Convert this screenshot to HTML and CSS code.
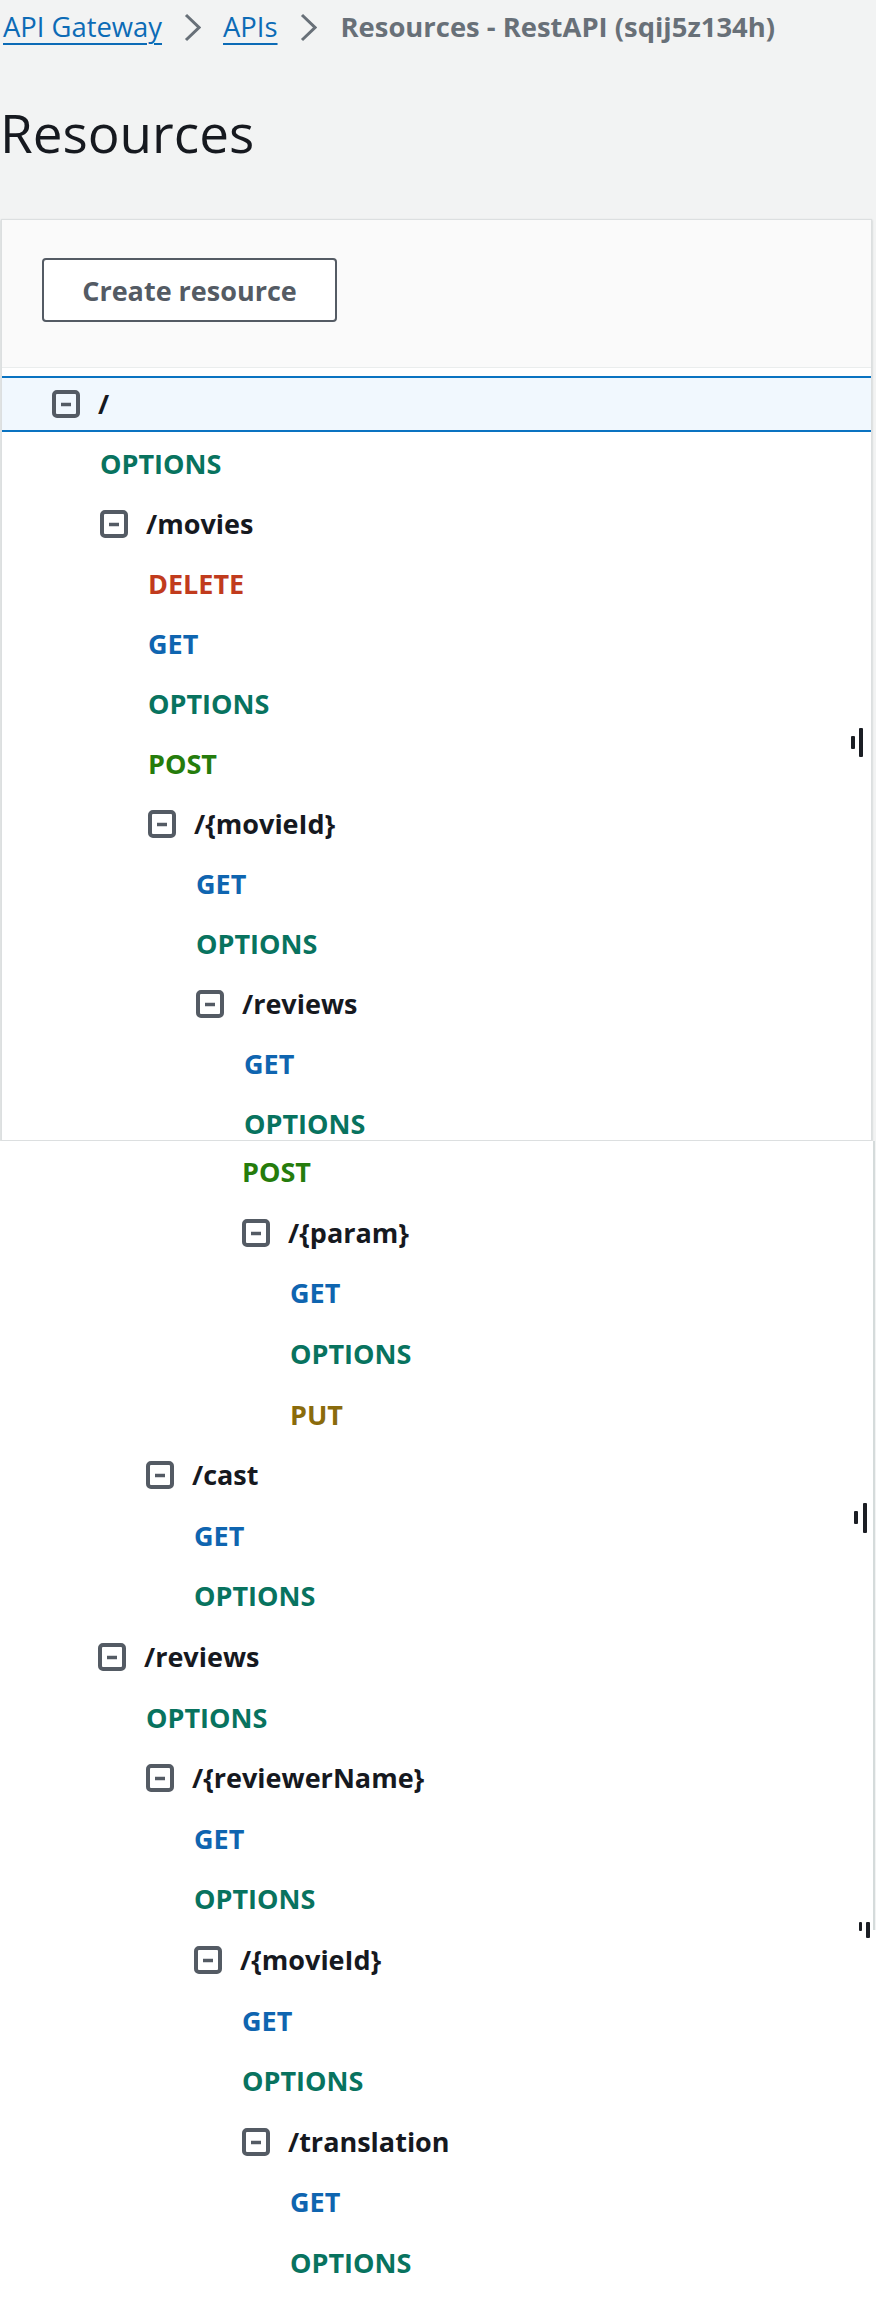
FILE: index.html
```html
<!DOCTYPE html>
<html lang="en">
<head>
<meta charset="utf-8">
<title>Resources - RestAPI</title>
<link rel="stylesheet" href="styles.css">
</head>
<body>
<div class="page">
  <nav class="crumbs">
    <a class="crumb-link" href="#">API Gateway</a>
    <svg class="chev" viewBox="0 0 17 29" width="17" height="29"><path d="M2 2 L15 14.5 L2 27" fill="none" stroke="#687078" stroke-width="3"/></svg>
    <a class="crumb-link" href="#">APIs</a>
    <svg class="chev" viewBox="0 0 17 29" width="17" height="29"><path d="M2 2 L15 14.5 L2 27" fill="none" stroke="#687078" stroke-width="3"/></svg>
    <span class="crumb-current">Resources - RestAPI (sqij5z134h)</span>
  </nav>

  <h1 class="title">Resources</h1>

  <section class="card">
    <div class="card-head">
      <button class="btn" type="button">Create resource</button>
    </div>
    <div class="tree tree-top">
      <div class="row res selected i0"><svg class="tog" viewBox="0 0 28 28" width="28" height="28"><rect x="2" y="2" width="24" height="24" rx="3" fill="none" stroke="#545b64" stroke-width="4"/><path d="M9 14.5h10" stroke="#545b64" stroke-width="3.5"/></svg><span class="name">/</span></div>
      <div class="row i1"><span class="m m-options">OPTIONS</span></div>
      <div class="row res i1"><svg class="tog" viewBox="0 0 28 28" width="28" height="28"><rect x="2" y="2" width="24" height="24" rx="3" fill="none" stroke="#545b64" stroke-width="4"/><path d="M9 14.5h10" stroke="#545b64" stroke-width="3.5"/></svg><span class="name">/movies</span></div>
      <div class="row i2"><span class="m m-delete">DELETE</span></div>
      <div class="row i2"><span class="m m-get">GET</span></div>
      <div class="row i2"><span class="m m-options">OPTIONS</span></div>
      <div class="row i2"><span class="m m-post">POST</span></div>
      <div class="row res i2"><svg class="tog" viewBox="0 0 28 28" width="28" height="28"><rect x="2" y="2" width="24" height="24" rx="3" fill="none" stroke="#545b64" stroke-width="4"/><path d="M9 14.5h10" stroke="#545b64" stroke-width="3.5"/></svg><span class="name">/{movieId}</span></div>
      <div class="row i3"><span class="m m-get">GET</span></div>
      <div class="row i3"><span class="m m-options">OPTIONS</span></div>
      <div class="row res i3"><svg class="tog" viewBox="0 0 28 28" width="28" height="28"><rect x="2" y="2" width="24" height="24" rx="3" fill="none" stroke="#545b64" stroke-width="4"/><path d="M9 14.5h10" stroke="#545b64" stroke-width="3.5"/></svg><span class="name">/reviews</span></div>
      <div class="row i4"><span class="m m-get">GET</span></div>
      <div class="row i4"><span class="m m-options">OPTIONS</span></div>
    </div>
  </section>

  <div class="tree tree-cont">
    <div class="row i4"><span class="m m-post">POST</span></div>
    <div class="row res i4"><svg class="tog" viewBox="0 0 28 28" width="28" height="28"><rect x="2" y="2" width="24" height="24" rx="3" fill="none" stroke="#545b64" stroke-width="4"/><path d="M9 14.5h10" stroke="#545b64" stroke-width="3.5"/></svg><span class="name">/{param}</span></div>
    <div class="row i5"><span class="m m-get">GET</span></div>
    <div class="row i5"><span class="m m-options">OPTIONS</span></div>
    <div class="row i5"><span class="m m-put">PUT</span></div>
    <div class="row res i2"><svg class="tog" viewBox="0 0 28 28" width="28" height="28"><rect x="2" y="2" width="24" height="24" rx="3" fill="none" stroke="#545b64" stroke-width="4"/><path d="M9 14.5h10" stroke="#545b64" stroke-width="3.5"/></svg><span class="name">/cast</span></div>
    <div class="row i3"><span class="m m-get">GET</span></div>
    <div class="row i3"><span class="m m-options">OPTIONS</span></div>
    <div class="row res i1"><svg class="tog" viewBox="0 0 28 28" width="28" height="28"><rect x="2" y="2" width="24" height="24" rx="3" fill="none" stroke="#545b64" stroke-width="4"/><path d="M9 14.5h10" stroke="#545b64" stroke-width="3.5"/></svg><span class="name">/reviews</span></div>
    <div class="row i2"><span class="m m-options">OPTIONS</span></div>
    <div class="row res i2"><svg class="tog" viewBox="0 0 28 28" width="28" height="28"><rect x="2" y="2" width="24" height="24" rx="3" fill="none" stroke="#545b64" stroke-width="4"/><path d="M9 14.5h10" stroke="#545b64" stroke-width="3.5"/></svg><span class="name">/{reviewerName}</span></div>
    <div class="row i3"><span class="m m-get">GET</span></div>
    <div class="row i3"><span class="m m-options">OPTIONS</span></div>
  </div>

  <div class="tree tree-end">
    <div class="row res i3"><svg class="tog" viewBox="0 0 28 28" width="28" height="28"><rect x="2" y="2" width="24" height="24" rx="3" fill="none" stroke="#545b64" stroke-width="4"/><path d="M9 14.5h10" stroke="#545b64" stroke-width="3.5"/></svg><span class="name">/{movieId}</span></div>
    <div class="row i4"><span class="m m-get">GET</span></div>
    <div class="row i4"><span class="m m-options">OPTIONS</span></div>
    <div class="row res i4"><svg class="tog" viewBox="0 0 28 28" width="28" height="28"><rect x="2" y="2" width="24" height="24" rx="3" fill="none" stroke="#545b64" stroke-width="4"/><path d="M9 14.5h10" stroke="#545b64" stroke-width="3.5"/></svg><span class="name">/translation</span></div>
    <div class="row i5"><span class="m m-get">GET</span></div>
    <div class="row i5"><span class="m m-options">OPTIONS</span></div>
  </div>

  <span class="grip grip-a1"></span><span class="grip grip-a2"></span>
  <span class="grip grip-b1"></span><span class="grip grip-b2"></span>
  <span class="grip grip-c1"></span><span class="grip grip-c2"></span>
</div>
</body>
</html>
```

FILE: styles.css
```css
* { box-sizing: border-box; }

html, body {
  margin: 0;
  padding: 0;
}

body {
  width: 876px;
  background: #f2f3f3;
  font-family: "Open Sans", "Noto Sans", "DejaVu Sans", sans-serif;
  color: #16191f;
}

.page {
  position: relative;
}

/* Breadcrumbs */
.crumbs {
  display: flex;
  align-items: center;
  height: 36px;
  margin-top: 9px;
  padding-left: 3px;
  font-size: 27.4px;
  line-height: 36px;
  white-space: nowrap;
}

.crumb-link {
  color: #0c6bb6;
  text-decoration: underline;
  text-decoration-thickness: 2px;
  text-underline-offset: 6px;
}

.chev {
  display: block;
  margin: 0 22px 0 22px;
  flex: none;
}

.crumb-current {
  color: #687078;
  font-weight: 700;
  margin-left: 2px;
}

/* Title */
.title {
  margin: 53px 0 0 0;
  padding-left: 0;
  font-size: 53px;
  line-height: 70px;
  font-weight: 400;
  color: #16191f;
}

/* Card */
.card {
  margin: 51px 4px 0 1px;
  background: #ffffff;
  border: 1px solid #dcdfe0;
  box-shadow: 0 1px 2px rgba(0, 28, 36, 0.25);
}

.card-head {
  background: #fafafa;
  padding: 38px 0 45px 40px;
  border-bottom: 1px solid #eaeded;
}

.btn {
  display: block;
  width: 295px;
  height: 64px;
  border: 2px solid #545b64;
  border-radius: 4px;
  background: #ffffff;
  color: #545b64;
  font-family: "Open Sans", "Noto Sans", sans-serif;
  font-size: 27px;
  font-weight: 700;
  padding: 0;
}

/* Tree */
.tree-top {
  height: 772px;
  overflow: hidden;
  padding-top: 6px;
}

.row {
  display: flex;
  align-items: center;
  height: 60px;
  font-size: 27px;
  line-height: 36px;
  font-weight: 700;
  white-space: nowrap;
}

.tree-cont .row,
.tree-end .row {
  height: 60.6px;
}

.row.selected {
  height: 56px;
  margin: 2px 0;
  border-top: 2px solid #0a73c1;
  border-bottom: 2px solid #0a73c1;
  background: #f1f8fe;
}

.tog {
  display: block;
  flex: none;
  margin-right: 18px;
}

.name {
  color: #16191f;
}

.i0 { padding-left: 50px; }
.i1 { padding-left: 98px; }
.i2 { padding-left: 146px; }
.i3 { padding-left: 194px; }
.i4 { padding-left: 242px; }
.i5 { padding-left: 290px; }

.m-options { color: #08735f; }
.m-get     { color: #0f65b0; }
.m-delete  { color: #c13b1d; }
.m-post    { color: #257c0c; }
.m-put     { color: #8a6b0c; }

.tree-cont {
  width: 875px;
  background: #ffffff;
  border-right: 2px solid #d5dbdb;
  padding-top: 1px;
}

.tree-end {
  width: 876px;
  background: #ffffff;
  padding-bottom: 29px;
}

/* Split-panel drag grip marks */
.grip {
  position: absolute;
  background: #1b1e24;
  border-radius: 1px;
}
.grip-a1 { left: 851px; top: 727px; width: 4px; height: 13px; }
.grip-a2 { left: 859px; top: 719px; width: 4px; height: 29px; }
.grip-b1 { left: 854px; top: 1502px; width: 4px; height: 13px; }
.grip-b2 { left: 863px; top: 1494px; width: 4px; height: 30px; }
.grip-c1 { left: 859px; top: 1913px; width: 3px; height: 9px; }
.grip-c2 { left: 866px; top: 1913px; width: 4px; height: 16px; }
```
